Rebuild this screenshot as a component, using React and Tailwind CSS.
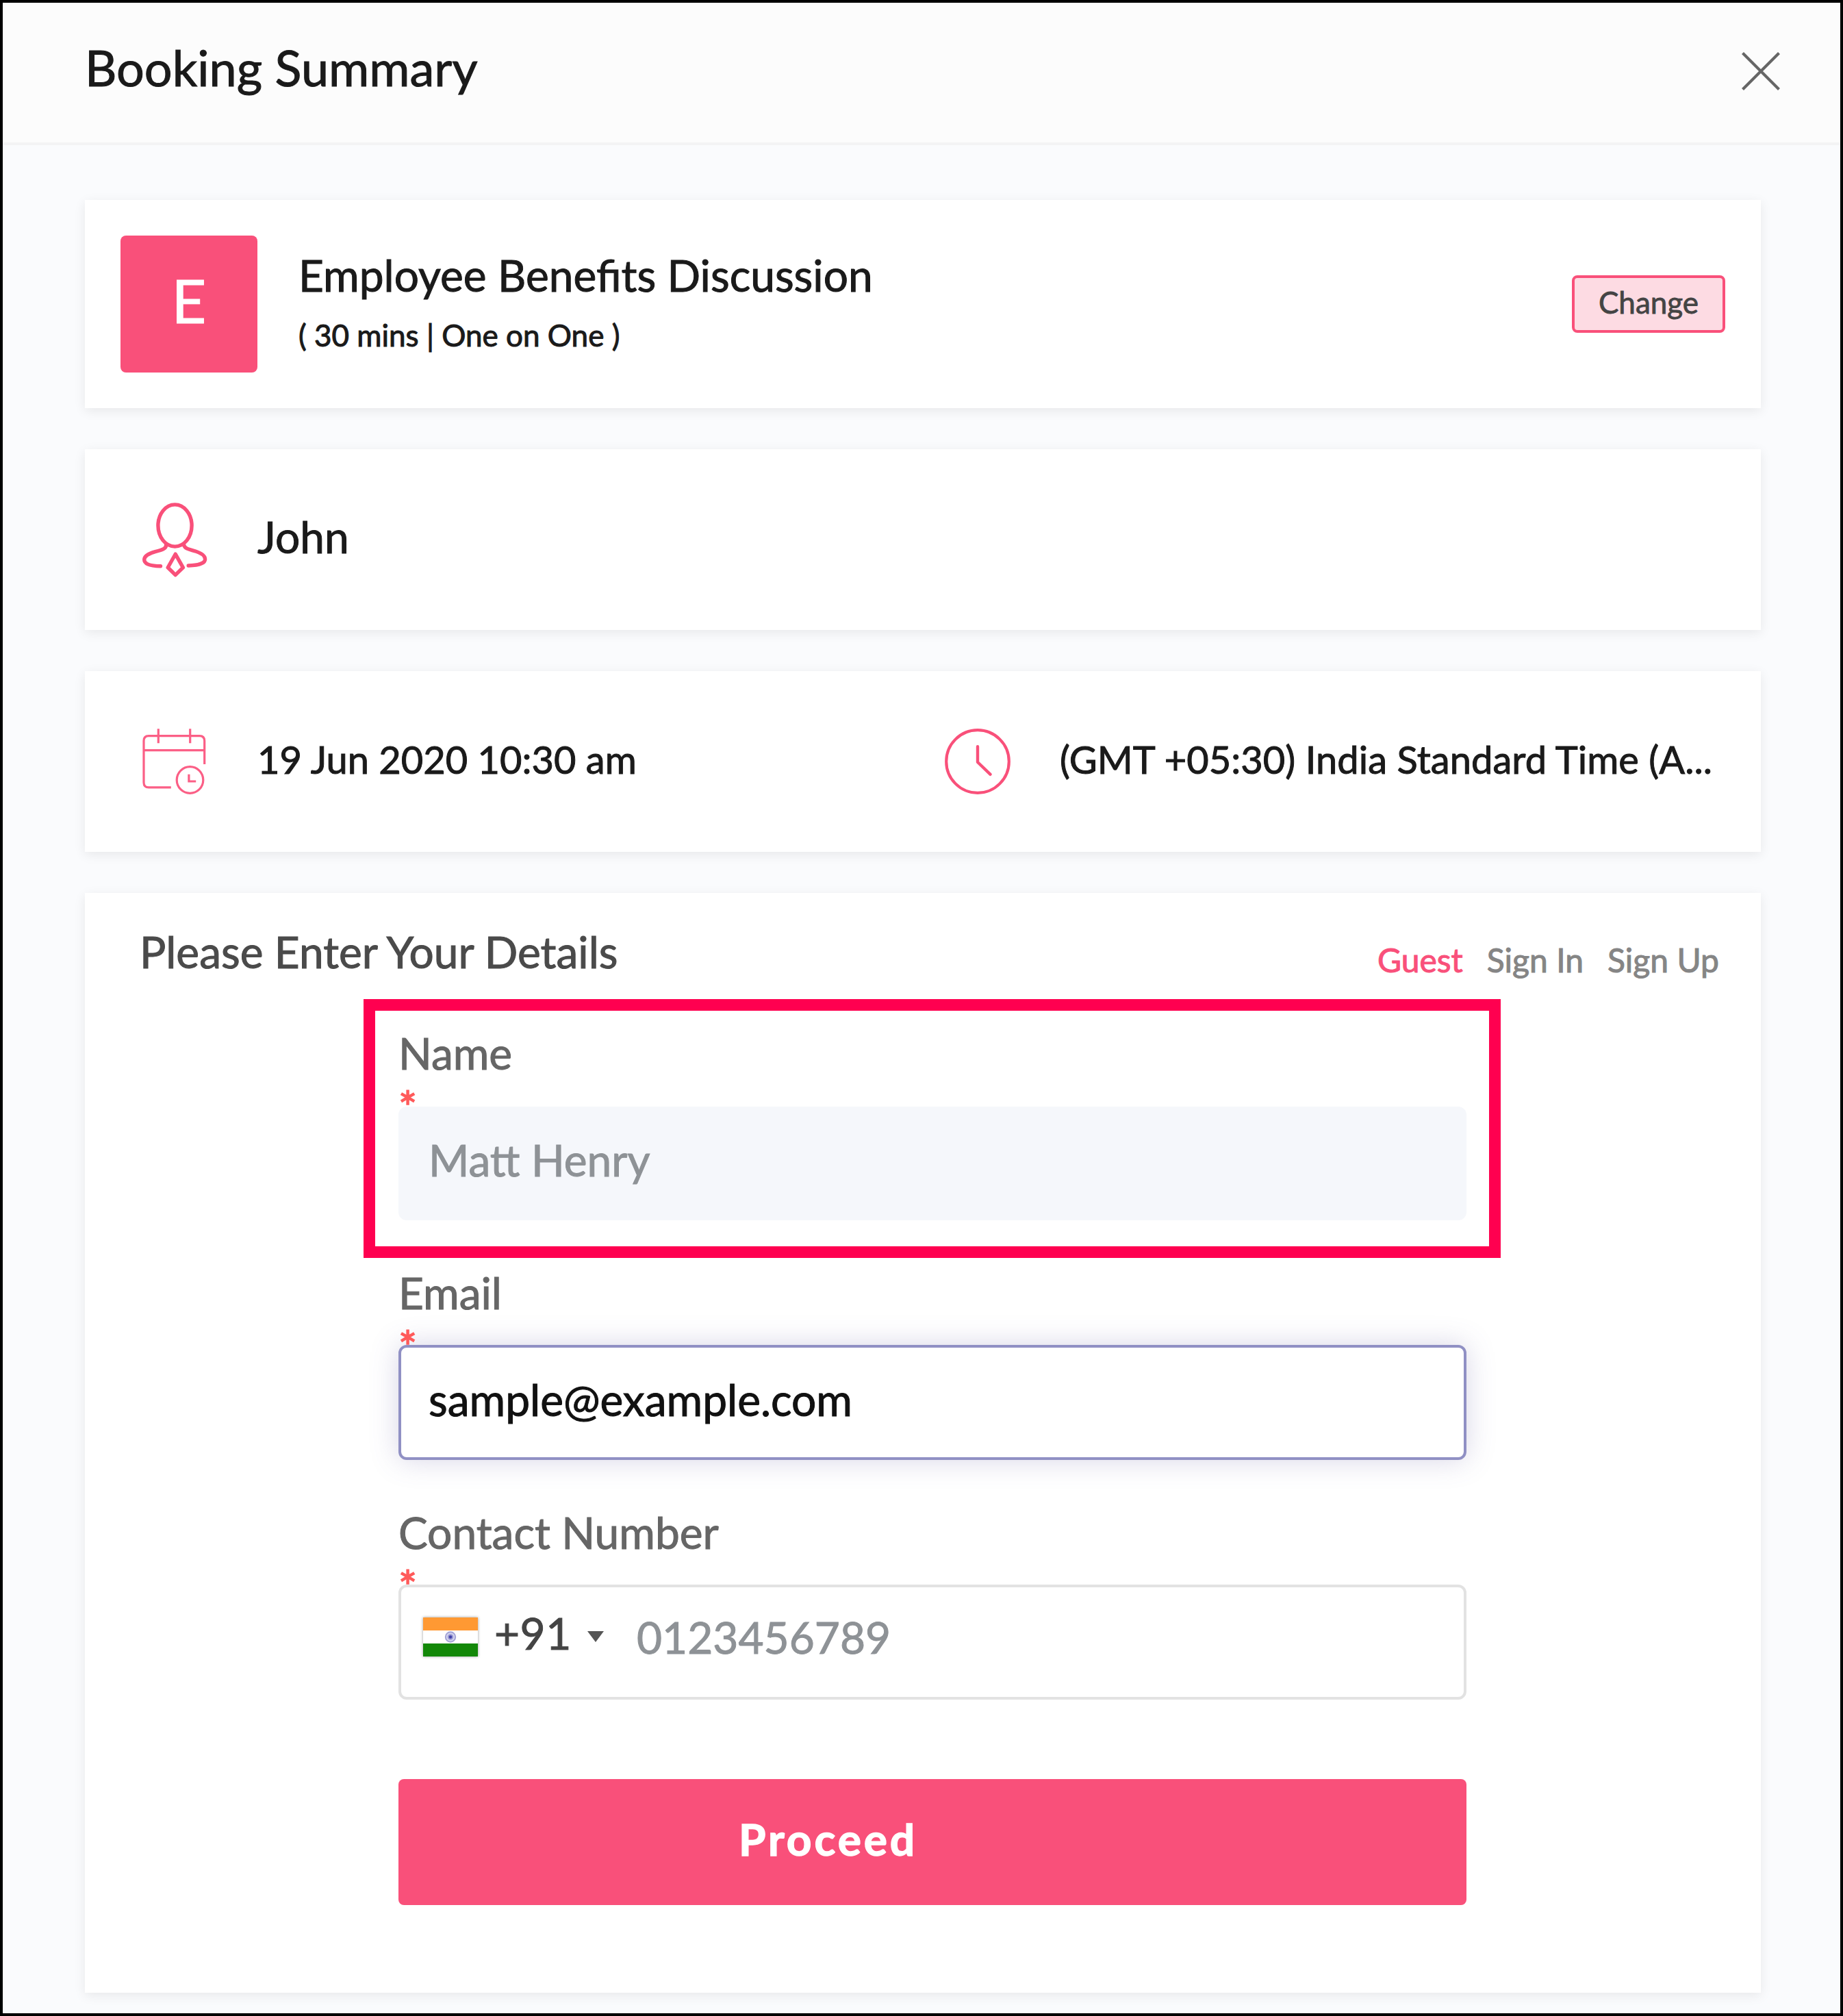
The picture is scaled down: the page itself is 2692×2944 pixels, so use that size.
import { useState } from "react";

const tabs = ["Guest", "Sign In", "Sign Up"]

function CloseIcon() {
  return (
    <svg className="w-[56px] h-[56px] mt-3" viewBox="0 0 56 56" fill="none" stroke="#666666" strokeWidth="4.2">
      <path d="M1.5 1.5L54.5 54.5M54.5 1.5L1.5 54.5" />
    </svg>
  )
}

function PersonIcon() {
  return (
    <svg className="w-[96px] h-[112px] shrink-0" viewBox="0 0 96 112" fill="none" stroke="#f9507a" strokeWidth="5.4" strokeLinecap="round" strokeLinejoin="round">
      <ellipse cx="47.5" cy="35.5" rx="24.6" ry="30.6" />
      <path d="M34.5 64.5C34.5 69 30 70.6 18.7 73.6C9 76.2 2.7 80.5 2.7 85.3C2.7 92 13 94.6 26.5 94.8" />
      <path d="M60.5 63.5C61.5 68.5 65.5 69.8 77 72.8C87 76 91.6 80.4 91.6 84.7C91.6 91 80 93.6 67.2 94" />
      <path d="M48.2 77.2L59.4 96.8L48.2 107.6L37.2 96.8Z" />
    </svg>
  )
}

function CalendarIcon() {
  return (
    <svg className="w-[96px] h-[100px] shrink-0" viewBox="0 0 96 100" fill="none" stroke="#fb5f86" strokeWidth="3.2">
      <path d="M41.8 87.9H9.2Q2 87.9 2 80.7V19.8Q2 12.6 9.2 12.6H83.5Q90.7 12.6 90.7 19.8V54" />
      <path d="M2 33.7H90.7M23.3 2.3V23.2M69.7 2.3V23.2" />
      <circle cx="69.5" cy="77" r="19.3" />
      <path d="M67.9 68.8V79H78.2" />
    </svg>
  )
}

function ClockIcon() {
  return (
    <svg className="w-[96px] h-[96px] shrink-0" viewBox="0 0 96 96" fill="none" stroke="#f9507a" strokeWidth="4.2" strokeLinecap="round" strokeLinejoin="round">
      <circle cx="48" cy="48" r="45.8" />
      <path d="M48 26.2V49L66.6 66.8" strokeWidth="4.4" />
    </svg>
  )
}

function IndiaFlag() {
  return (
    <svg className="w-[80px] h-[57px] shrink-0 shadow-[0_0_4px_rgba(0,0,0,0.4)]" viewBox="0 0 80 57">
      <rect width="80" height="57" fill="#ffffff" />
      <rect width="80" height="19" fill="#ff9933" />
      <rect y="38" width="80" height="19" fill="#138808" />
      <circle cx="40" cy="28.5" r="7.2" fill="#d5d5ee" stroke="#a3a3d6" strokeWidth="2" />
      <circle cx="40" cy="28.5" r="4.2" fill="#9999d2" />
      <circle cx="40" cy="28.5" r="2.2" fill="#4040a8" />
    </svg>
  )
}

function Card({ className, children }) {
  return <div className={`bg-white shadow-[0_4px_16px_rgba(0,0,0,0.08)] ${className}`}>{children}</div>
}

function Field({ label, children }) {
  return (
    <div className="h-[350px]">
      <label className="block text-[64px] leading-[84px] text-[#666666]">{label}</label>
      <div className="h-[34px] text-[64px] leading-[73px] text-[#ff5a5a] [-webkit-text-stroke:1.6px]">*</div>
      {children}
    </div>
  )
}

export default function App() {
  const [active, setActive] = useState("Guest")
  const [email, setEmail] = useState("sample@example.com")

  return (
    <div className="w-[2692px] h-[2944px] overflow-hidden border-4 border-black bg-[#fafbfd] font-['Lato',sans-serif] text-[#1a1a1a] [-webkit-text-stroke:1px]">
      <div className="flex items-center justify-between h-[208px] pl-[120px] pr-[88px] pb-4 bg-[#fcfcfc] border-b-4 border-[#f3f3f4]">
        <h1 className="text-[72px] leading-[88px]">Booking Summary</h1>
        <button><CloseIcon /></button>
      </div>

      <div className="flex flex-col gap-15 pl-[120px] pr-[116px] pt-20">
        <Card className="flex items-center h-[304px] px-[52px]">
          <div className="flex items-center justify-center w-[200px] h-[200px] pb-3 rounded-lg bg-[#f9507a] text-white text-[88px] leading-none">E</div>
          <div className="flex-1 ml-15 pt-0.5">
            <p className="text-[64px] leading-[88px]">Employee Benefits Discussion</p>
            <p className="text-[44px] leading-[86px]">( 30 mins | One on One )</p>
          </div>
          <button className="w-[224px] h-[84px] pb-[7px] rounded-lg border-4 border-[#f9507a] bg-[#fddbe3] text-[44px] leading-[68px] text-[#444444] [-webkit-text-stroke:0.8px]">Change</button>
        </Card>

        <Card className="flex items-center h-[264px] px-[84px]">
          <PersonIcon />
          <span className="ml-18 mb-2 text-[64px] leading-[80px]">John</span>
        </Card>

        <Card className="flex items-center h-[264px] pl-[84px]">
          <div className="flex items-center w-[1172px]">
            <CalendarIcon />
            <span className="ml-18 mb-1.5 text-[56px] leading-[72px]">19 Jun 2020 10:30 am</span>
          </div>
          <ClockIcon />
          <span className="ml-18 mb-1.5 text-[56px] leading-[72px] tracking-[0.05px] whitespace-nowrap">(GMT +05:30) India Standard Time (A...</span>
        </Card>

        <Card className="h-[1606px]">
          <div className="flex justify-between h-48 pl-20">
            <h2 className="text-[64px] leading-[172px] text-[#4a4a4a]">Please Enter Your Details</h2>
            <div className="flex gap-[35px] w-[560px] pt-3 text-[48px] leading-[172px]">
              {tabs.map(tab => (
                <button key={tab} onClick={() => setActive(tab)} className={`h-[172px] ${active === tab ? "text-[#f9507a]" : "text-[#858585]"}`}>{tab}</button>
              ))}
            </div>
          </div>

          <div className="relative w-[1560px] ml-[458px]">
            <Field label="Name">
              <input placeholder="Matt Henry" className="block w-full h-[166px] mt-0.5 px-[44px] pb-3 rounded-xl bg-[#f5f7fb] text-[64px] placeholder:text-[#8e9296]" />
            </Field>
            {/* highlighted field */}
            <div className="absolute left-[-51px] top-[-37px] w-[1661px] h-[378px] border-[17px] border-[#ff0050] pointer-events-none" />

            <Field label="Email">
              <input value={email} onChange={e => setEmail(e.target.value)} className="block w-full h-[168px] px-[40px] pb-2.5 rounded-xl border-4 border-[#9090c4] bg-white text-[64px] text-[#111111] shadow-[0_0_40px_rgba(100,90,160,0.25)]" />
            </Field>

            <Field label="Contact Number">
              <div className="flex items-center h-[168px] pl-8 pb-4 rounded-xl border-4 border-[#e2e2e2] bg-white">
                <IndiaFlag />
                <span className="w-[136px] ml-[24px] mb-2.5 text-[64px] leading-[80px] tracking-[0.5px] text-[#444444]">+91</span>
                <svg className="w-6 h-4" viewBox="0 0 24 16" fill="#555555"><path d="M0 0H24L12 16Z" /></svg>
                <input placeholder="0123456789" className="w-[900px] ml-[48px] mt-0.5 text-[64px] leading-[80px] placeholder:text-[#8e9296]" />
              </div>
            </Field>

            <button className="block w-full h-[184px] mt-[52px] pl-[497px] pb-2 rounded-lg bg-[#f9507a] text-left text-[64px] font-bold tracking-[3.9px] text-white [-webkit-text-stroke:1.4px]">Proceed</button>
          </div>
        </Card>
      </div>
    </div>
  )
}
